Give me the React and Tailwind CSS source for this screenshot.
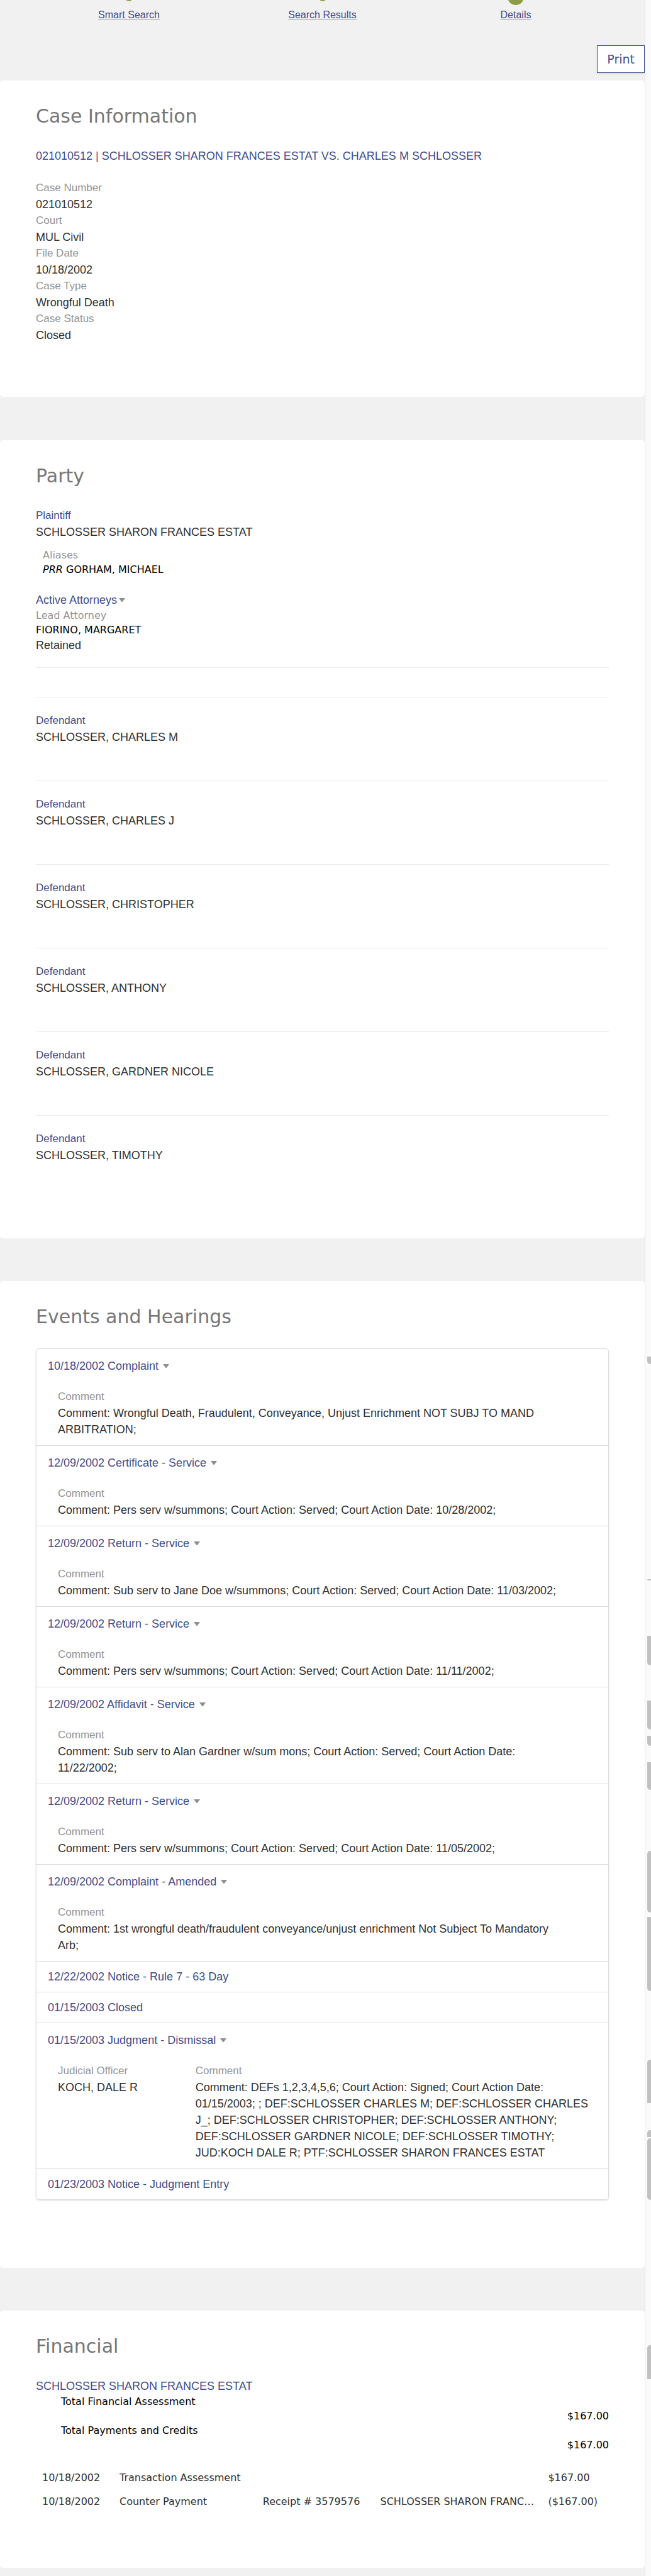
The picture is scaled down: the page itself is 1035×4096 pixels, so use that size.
const NAVY = "text-[#3f4d8c]";
const SANS = "font-['Liberation_Sans',Arial,sans-serif]";
const WIDE = "font-['DejaVu_Sans',Verdana,sans-serif]";

const steps = [
  { label: "Smart Search", current: false },
  { label: "Search Results", current: false },
  { label: "Details", current: true },
];

const caseFields = [
  ["Case Number", "021010512"],
  ["Court", "MUL Civil"],
  ["File Date", "10/18/2002"],
  ["Case Type", "Wrongful Death"],
  ["Case Status", "Closed"],
];

const defendants = [
  "SCHLOSSER, CHARLES M",
  "SCHLOSSER, CHARLES J",
  "SCHLOSSER, CHRISTOPHER",
  "SCHLOSSER, ANTHONY",
  "SCHLOSSER, GARDNER NICOLE",
  "SCHLOSSER, TIMOTHY",
];

const events = [
  {
    title: "10/18/2002 Complaint",
    comment:
      "Comment: Wrongful Death, Fraudulent, Conveyance, Unjust Enrichment NOT SUBJ TO MAND ARBITRATION;",
  },
  {
    title: "12/09/2002 Certificate - Service",
    comment: "Comment: Pers serv w/summons; Court Action: Served; Court Action Date: 10/28/2002;",
  },
  {
    title: "12/09/2002 Return - Service",
    comment: "Comment: Sub serv to Jane Doe w/summons; Court Action: Served; Court Action Date: 11/03/2002;",
  },
  {
    title: "12/09/2002 Return - Service",
    comment: "Comment: Pers serv w/summons; Court Action: Served; Court Action Date: 11/11/2002;",
  },
  {
    title: "12/09/2002 Affidavit - Service",
    comment:
      "Comment: Sub serv to Alan Gardner w/sum mons; Court Action: Served; Court Action Date: 11/22/2002;",
  },
  {
    title: "12/09/2002 Return - Service",
    comment: "Comment: Pers serv w/summons; Court Action: Served; Court Action Date: 11/05/2002;",
  },
  {
    title: "12/09/2002 Complaint - Amended",
    comment:
      "Comment: 1st wrongful death/fraudulent conveyance/unjust enrichment Not Subject To Mandatory Arb;",
  },
  { title: "12/22/2002 Notice - Rule 7 - 63 Day" },
  { title: "01/15/2003 Closed" },
  {
    title: "01/15/2003 Judgment - Dismissal",
    officer: "KOCH, DALE R",
    comment:
      "Comment: DEFs 1,2,3,4,5,6; Court Action: Signed; Court Action Date: 01/15/2003; ; DEF:SCHLOSSER CHARLES M; DEF:SCHLOSSER CHARLES J_; DEF:SCHLOSSER CHRISTOPHER; DEF:SCHLOSSER ANTHONY; DEF:SCHLOSSER GARDNER NICOLE; DEF:SCHLOSSER TIMOTHY; JUD:KOCH DALE R; PTF:SCHLOSSER SHARON FRANCES ESTAT",
  },
  { title: "01/23/2003 Notice - Judgment Entry" },
];

// Segments of the scroll track: space above, height, rounded ends.
const thumbs = [
  [2157, 12, "rounded-bl-[5px]"],
  [342, 2, "rounded-bl-[5px]"],
  [88, 47, "rounded-bl-[5px]"],
  [56, 46, "rounded-bl-[5px]"],
  [10, 16, "rounded-bl-[5px]"],
  [26, 44, "rounded-bl-[5px]"],
  [97, 98, "rounded-l-[5px]"],
  [7, 118, "rounded-bl-[5px]"],
  [109, 69, "rounded-tl-[5px]"],
  [43, 11, "rounded-tl-[5px]"],
  [2, 98, "rounded-l-[5px]"],
  [231, 54, "rounded-tl-[5px]"],
];

function Caret() {
  return (
    <svg className="inline-block align-middle" width="10" height="6" viewBox="0 0 10 6" aria-hidden="true">
      <path d="M0 0h10L6 5.4Q5 6.4 4 5.4Z" fill="#8f8f8f" />
    </svg>
  );
}

function Card({ title, className, children }) {
  return (
    <section className={`rounded-[5px] bg-white px-[57px] pt-[37px] ${className}`}>
      <h2 className={`mb-[30px] text-[30px] leading-[40px] text-[#777] ${WIDE}`}>{title}</h2>
      {children}
    </section>
  );
}

function Label({ children }) {
  return <div className="text-[17px] text-[#949494]">{children}</div>;
}

function Event({ event }) {
  if (!event.comment) {
    return (
      <li className="px-[18px] py-[11px]">
        <a href="#event" className={NAVY}>{event.title}</a>
      </li>
    );
  }
  return (
    <li className="pt-[14px] pb-[12px]">
      <button type="button" className={`ml-[18px] flex items-center gap-[7px] ${NAVY}`}>
        {event.title}
        <Caret />
      </button>
      {event.officer ? (
        <div className="mt-[23px] grid grid-cols-4 pl-[34px]">
          <div>
            <Label>Judicial Officer</Label>
            <div>{event.officer}</div>
          </div>
          <div className="col-span-3 pr-3">
            <Label>Comment</Label>
            <p>{event.comment}</p>
          </div>
        </div>
      ) : (
        <div className="mt-[23px] pr-[70px] pl-[34px]">
          <Label>Comment</Label>
          <p>{event.comment}</p>
        </div>
      )}
    </li>
  );
}

export default function App() {
  return (
    <div className={`flex bg-[#f1f1f1] text-[18px] leading-[26px] text-[#303030] ${SANS}`}>
      <main className="min-w-0 flex-1 pb-[13px]">
        <nav className="grid grid-cols-3 px-[5%]">
          {steps.map((s) => (
            <div key={s.label} className="flex flex-col items-center overflow-hidden">
              <div className="h-3">
                <div
                  className={
                    s.current
                      ? "-mt-[18px] size-[26px] rounded-full bg-[#8f9c45]"
                      : "-mt-[10px] size-[12px] rounded-full bg-[#8f9c45]"
                  }
                />
              </div>
              <a
                href="#step"
                className={`text-[16px] leading-[24px] underline decoration-[#a0a0a0] ${NAVY}`}
              >
                {s.label}
              </a>
            </div>
          ))}
        </nav>
        <div className="mt-9 mb-3 flex justify-end">
          <button
            type="button"
            className={`h-[44px] border border-[#3f4d8c] bg-white px-[15px] text-[19px] shadow-sm ${NAVY} ${WIDE}`}
          >
            Print
          </button>
        </div>

        <Card title="Case Information" className="pb-[85px]">
          <a href="#case" className={`mb-[25px] block ${NAVY}`}>
            021010512 | SCHLOSSER SHARON FRANCES ESTAT VS. CHARLES M SCHLOSSER
          </a>
          <dl>
            {caseFields.map(([k, v]) => (
              <div key={k}>
                <dt className="text-[17px] text-[#949494]">{k}</dt>
                <dd>{v}</dd>
              </div>
            ))}
          </dl>
        </Card>

        <Card title="Party" className="mt-[69px] pb-[119px]">
          <div className={`text-[17px] ${NAVY}`}>Plaintiff</div>
          <div>SCHLOSSER SHARON FRANCES ESTAT</div>
          <div className={`mt-3 pl-[11px] text-[16px] leading-[23px] ${WIDE}`}>
            <div className="text-[#949494]">Aliases</div>
            <div className="text-black">
              <i className="italic">PRR</i> GORHAM, MICHAEL
            </div>
          </div>
          <button type="button" className={`mt-6 flex items-center gap-[3px] ${NAVY}`}>
            Active Attorneys
            <Caret />
          </button>
          <div className={`text-[16px] leading-[23px] ${WIDE}`}>
            <div className="text-[#949494]">Lead Attorney</div>
            <div className="text-black">FIORINO, MARGARET</div>
          </div>
          <div>Retained</div>
          <hr className="mt-[22px] border-[#ebebeb]" />
          <div className="mt-[46px] flex flex-col gap-14">
            {defendants.map((name) => (
              <div key={name} className="border-t border-[#ebebeb] pt-6">
                <div className={`text-[17px] ${NAVY}`}>Defendant</div>
                <div>{name}</div>
              </div>
            ))}
          </div>
        </Card>

        <Card title="Events and Hearings" className="mt-[68px] pb-[108px]">
          <ul className="divide-y divide-[#dcdcdc] rounded-[5px] border border-[#dcdcdc] shadow-sm">
            {events.map((e, i) => (
              <Event key={i} event={e} />
            ))}
          </ul>
        </Card>

        <Card title="Financial" className="mt-[68px] pb-[86px]">
          <div className={NAVY}>SCHLOSSER SHARON FRANCES ESTAT</div>
          <dl className={`text-[16px] leading-[23px] text-black ${WIDE}`}>
            <dt className="pl-10">Total Financial Assessment</dt>
            <dd className="text-right">$167.00</dd>
            <dt className="pl-10">Total Payments and Credits</dt>
            <dd className="text-right">$167.00</dd>
          </dl>
          <table className={`mt-[22px] w-full table-fixed text-left text-[16px] leading-[38px] whitespace-nowrap ${WIDE}`}>
            <colgroup>
              <col className="w-[13.5%]" />
              <col className="w-[25%]" />
              <col className="w-[20.5%]" />
              <col className="w-[29.3%]" />
              <col />
            </colgroup>
            <tbody>
              <tr>
                <td className="pl-[10px]">10/18/2002</td>
                <td className="pl-[10px]">Transaction Assessment</td>
                <td />
                <td />
                <td className="pl-[10px]">$167.00</td>
              </tr>
              <tr>
                <td className="pl-[10px]">10/18/2002</td>
                <td className="pl-[10px]">Counter Payment</td>
                <td className="pl-[10px]">Receipt # 3579576</td>
                <td className="pl-[10px]">SCHLOSSER SHARON FRANC…</td>
                <td className="pl-[10px]">($167.00)</td>
              </tr>
            </tbody>
          </table>
        </Card>
      </main>
      <aside className="w-[10px] shrink-0 border-l border-[#e4e4e4] bg-[#fafafa] pl-[3px]" aria-hidden="true">
        {thumbs.map(([gap, height, ends], i) => (
          <div key={i} className={`bg-[#c1c1c1] ${ends}`} style={{ marginTop: gap, height }} />
        ))}
      </aside>
    </div>
  );
}
